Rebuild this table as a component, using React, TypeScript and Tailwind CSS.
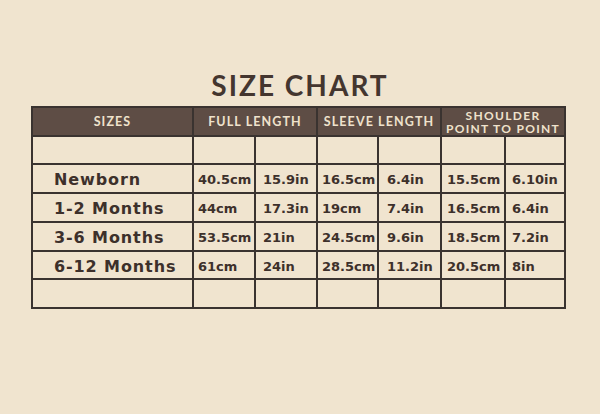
import React from "react";

const rows = [
  ["Newborn", "40.5cm", "15.9in", "16.5cm", "6.4in", "15.5cm", "6.10in"],
  ["1-2 Months", "44cm", "17.3in", "19cm", "7.4in", "16.5cm", "6.4in"],
  ["3-6 Months", "53.5cm", "21in", "24.5cm", "9.6in", "18.5cm", "7.2in"],
  ["6-12 Months", "61cm", "24in", "28.5cm", "11.2in", "20.5cm", "8in"],
];

const padL = ["pl-[21px]", "pl-[4px]", "pl-[7px]", "pl-[4px]", "pl-[8px]", "pl-[5px]", "pl-[6px]"];
const rowH = ["h-[27px]", "h-[27px]", "h-[27px]", "h-[26px]"];

const head =
  "h-[27px] bg-[#5e4d45] flex items-center justify-center pt-[1px] font-['Lato',sans-serif] text-[12.5px] font-bold tracking-[1.1px] text-[#efe2cc]";

export default function App() {
  return (
    <div className="w-[600px] h-[414px] bg-[#f0e4cf] flex flex-col items-start font-['DejaVu_Sans',sans-serif]">
      <div className="w-full flex justify-center pt-[68px] h-[106px]">
        <h1 className="font-['Lato',sans-serif] text-[28px] leading-[34px] font-bold tracking-[2px] text-[#44362f]">
          SIZE CHART
        </h1>
      </div>
      <div className="ml-[31px] bg-[#3a3330] p-[2px] grid grid-cols-[159px_60px_60px_59px_61px_62px_58px] gap-[2px]">
        <div className={head}>SIZES</div>
        <div className={`col-span-2 ${head}`}>FULL LENGTH</div>
        <div className={`col-span-2 ${head}`}>SLEEVE LENGTH</div>
        <div className="col-span-2 h-[27px] bg-[#5e4d45] flex flex-col items-center justify-center font-['Lato',sans-serif] text-[12px] leading-[13px] font-bold tracking-[1.3px] text-[#efe2cc]">
          <span>SHOULDER</span>
          <span>POINT TO POINT</span>
        </div>
        {Array.from({ length: 7 }).map((_, i) => (
          <div key={"e" + i} className="h-[26px] bg-[#f0e4cf]" />
        ))}
        {rows.map((r, ri) =>
          r.map((c, ci) => (
            <div
              key={ri + "-" + ci}
              className={`${rowH[ri]} bg-[#f0e4cf] flex items-center pt-[3px] ${padL[ci]} text-[#3d302b] font-bold ${
                ci === 0 ? "text-[16px] tracking-[0.9px]" : "text-[13px] tracking-[0px]"
              } whitespace-nowrap overflow-hidden`}
            >
              {c}
            </div>
          ))
        )}
        {Array.from({ length: 7 }).map((_, i) => (
          <div key={"f" + i} className="h-[27px] bg-[#f0e4cf]" />
        ))}
      </div>
    </div>
  );
}
